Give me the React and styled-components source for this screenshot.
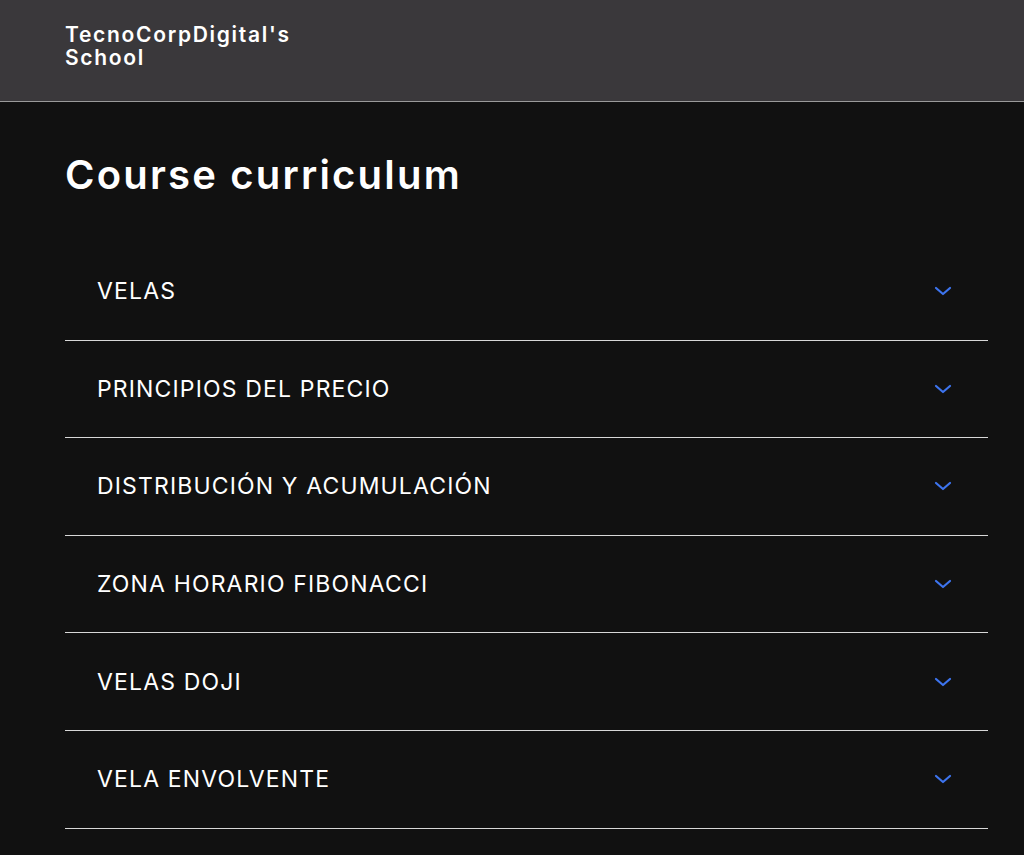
import React from 'react'
import styled, { createGlobalStyle } from 'styled-components'

const Global = createGlobalStyle`
  html, body {
    margin: 0;
    padding: 0;
    background: #111111;
  }
`

const Page = styled.div`
  min-height: 855px;
  background: #111111;
  color: #ffffff;
`

const Header = styled.header`
  height: 102px;
  background: #3a383b;
  border-bottom: 1px solid #9a9a9a;
  box-sizing: border-box;
  padding: 23px 65px 0;
`

const Brand = styled.div`
  width: 260px;
  font-family: Inter, "Open Sans", sans-serif;
  font-weight: 600;
  font-size: 21px;
  line-height: 23px;
  letter-spacing: 1.7px;
`

const Main = styled.main`
  padding: 48px 36px 0 65px;
`

const Title = styled.h1`
  margin: 0 0 43px;
  font-family: Inter, "Open Sans", sans-serif;
  font-weight: 600;
  font-size: 40px;
  line-height: 50px;
  letter-spacing: 2.2px;
`

const List = styled.div`
  display: flex;
  flex-direction: column;
`

const Row = styled.div`
  height: 97.6px;
  box-sizing: border-box;
  border-bottom: 1.5px solid #d8d8d8;
  display: flex;
  align-items: center;
  justify-content: space-between;
  padding: 0 36px 0 32px;
`

const Label = styled.span`
  font-family: Inter, "Noto Sans", sans-serif;
  font-size: 23px;
  font-weight: 400;
  letter-spacing: 1.15px;
`

const Chevron = () => (
  <svg width="18" height="10" viewBox="0 0 18 10">
    <path d="M2 2 L9 8 L16 2" fill="none" stroke="#3d74ee" strokeWidth="2.2" strokeLinecap="round" strokeLinejoin="round" />
  </svg>
)

const items = [
  'VELAS',
  'PRINCIPIOS DEL PRECIO',
  'DISTRIBUCIÓN Y ACUMULACIÓN',
  'ZONA HORARIO FIBONACCI',
  'VELAS DOJI',
  'VELA ENVOLVENTE',
]

export default function App() {
  return (
    <Page>
      <Global />
      <Header>
        <Brand>TecnoCorpDigital's School</Brand>
      </Header>
      <Main>
        <Title>Course curriculum</Title>
        <List>
          {items.map((t) => (
            <Row key={t}>
              <Label>{t}</Label>
              <Chevron />
            </Row>
          ))}
        </List>
      </Main>
    </Page>
  )
}
